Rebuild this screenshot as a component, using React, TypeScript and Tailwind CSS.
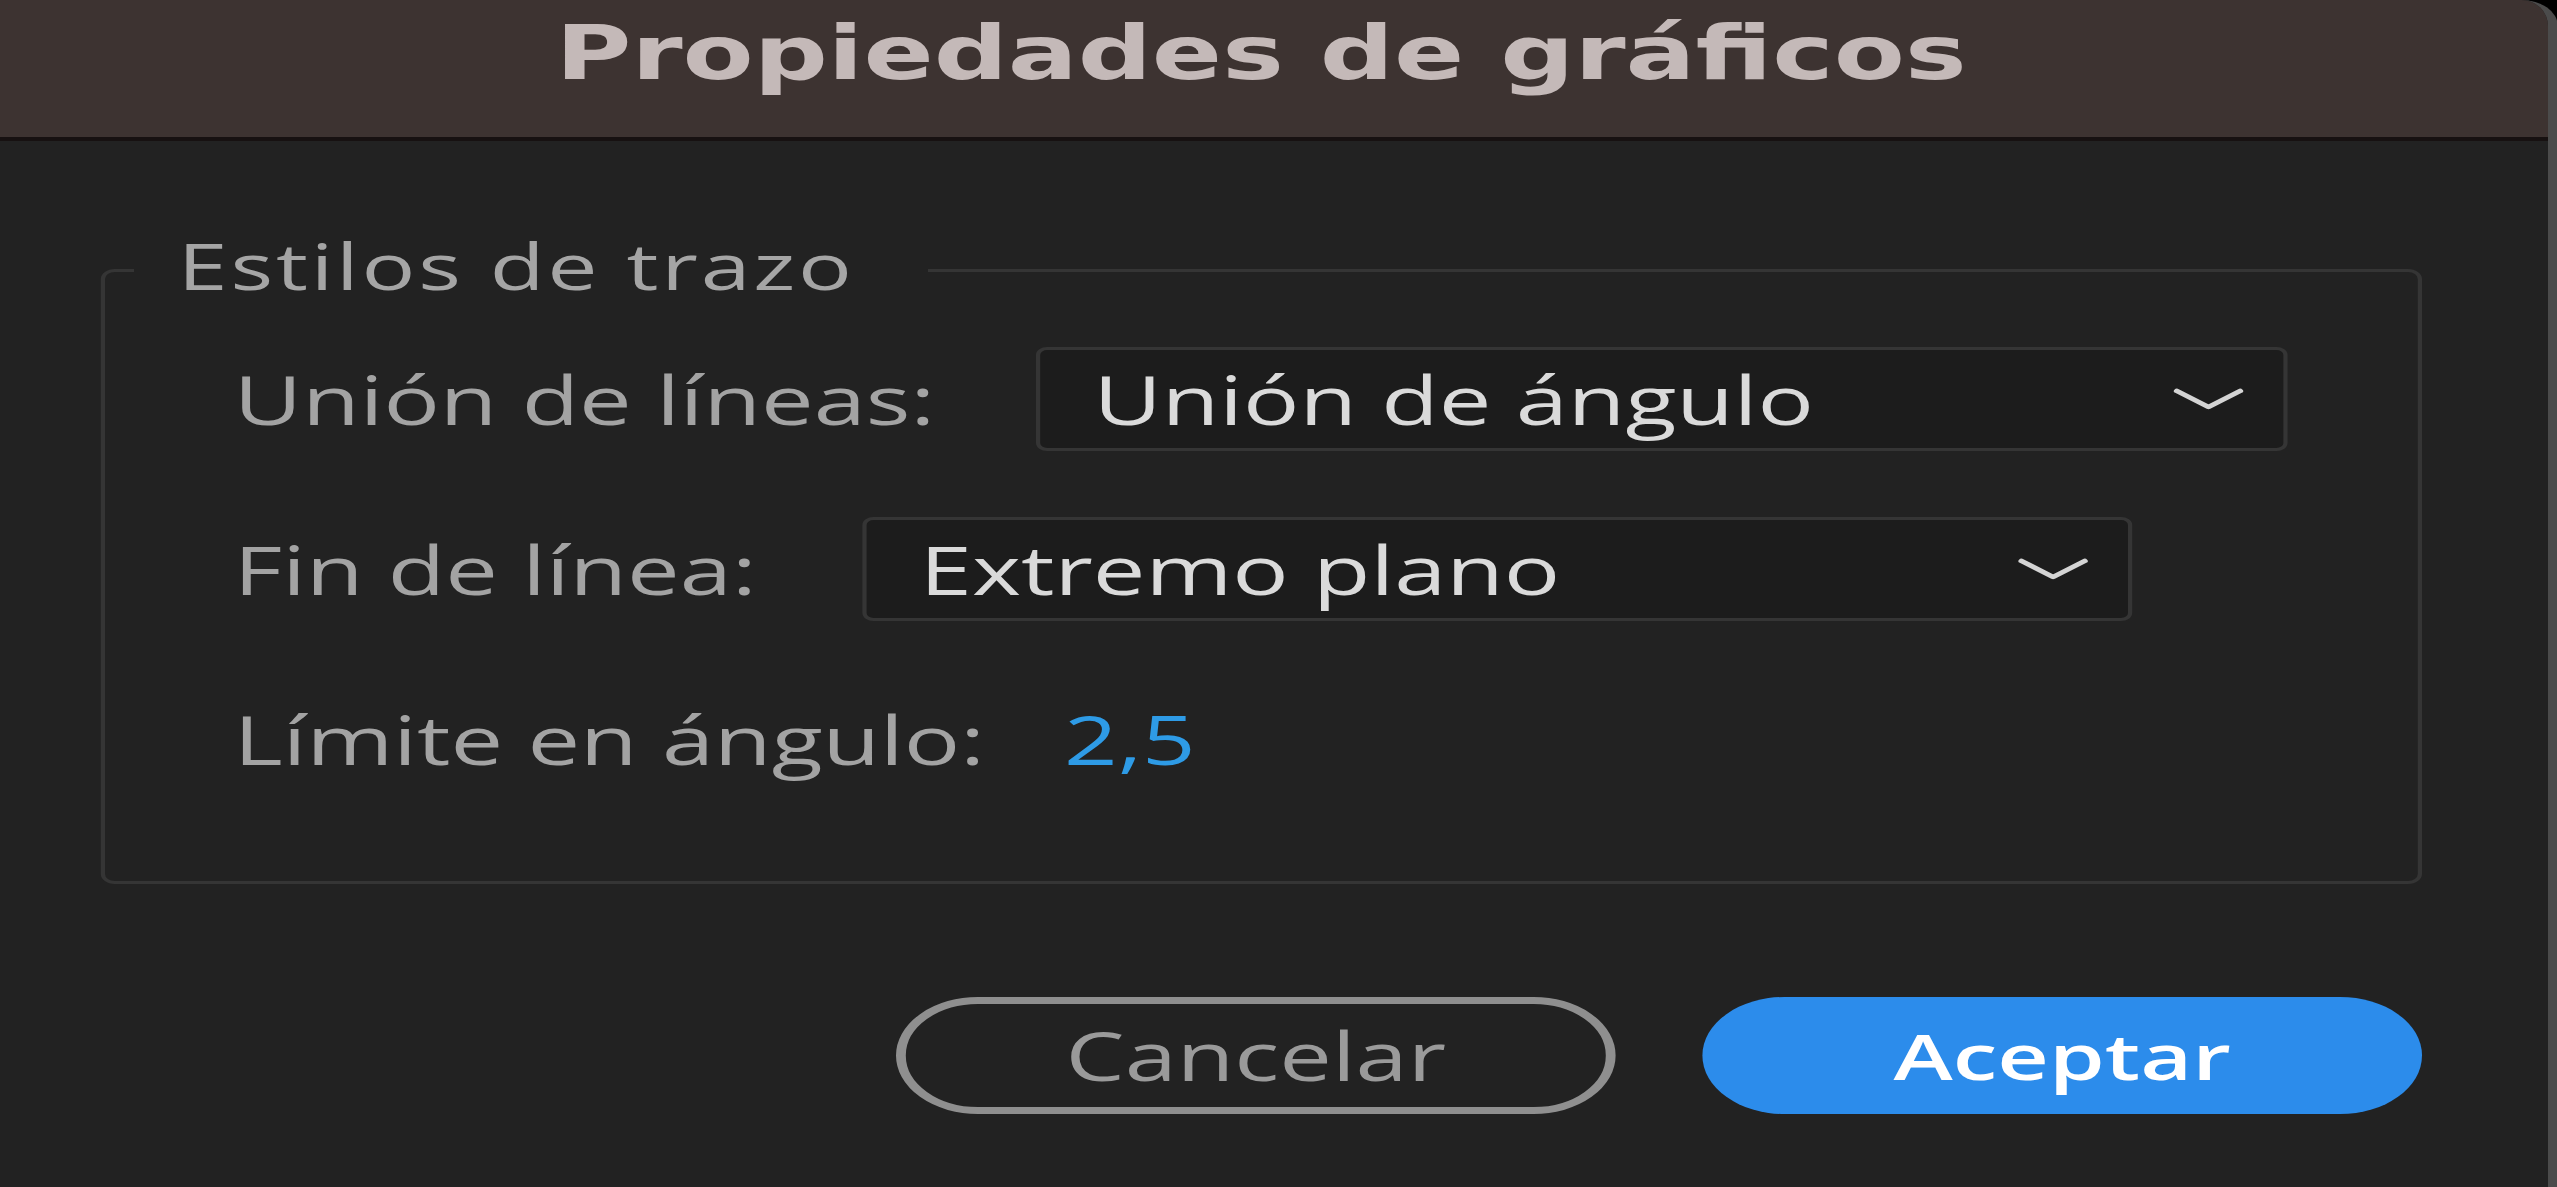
import React from "react";

// Stroke style dialog. The whole window is laid out at natural width
// and stretched horizontally, the way the panel is rendered on screen.

const labelText = "shrink-0 text-[67px] font-medium leading-none text-[#a3a3a3] whitespace-nowrap";

function Chevron() {
  return (
    <svg width="51" height="22" viewBox="0 0 51 22" fill="none" className="shrink-0">
      <polyline
        points="3,3 25.5,19 48,3"
        stroke="#d4d4d4"
        strokeWidth="4.5"
        strokeLinecap="round"
        strokeLinejoin="round"
      />
    </svg>
  );
}

function Select({ value, width }: { value: string; width: string }) {
  return (
    <div
      className={`${width} h-[104px] shrink-0 flex items-center justify-between pl-[38px] pr-[28px] bg-[#1c1c1c] border-[3px] border-[#353535] rounded-[8px]`}
    >
      <span className="text-[67px] font-medium leading-none text-[#dadada] whitespace-nowrap">{value}</span>
      <Chevron />
    </div>
  );
}

export default function App() {
  return (
    <div className="w-full h-[1187px] bg-black overflow-hidden">
      <div className="w-[1826.5px] h-[1187px] origin-top-left scale-x-[1.4] font-['Open_Sans',sans-serif]">
        <div className="h-full bg-[#222222] border-r-[7px] border-[#4b4b4b] rounded-tr-[26px] overflow-hidden">
          {/* title bar */}
          <div className="h-[141px] bg-[#3d3331] border-b-4 border-[#171111] pt-[16px] pr-[18px] text-center">
            <span className="font-['DejaVu_Sans',sans-serif] font-bold text-[74px] leading-none text-[#c4b9b8] whitespace-nowrap">
              Propiedades de gráficos
            </span>
          </div>

          <fieldset className="ml-[72px] mt-[93px] w-[1658px] border-[3px] border-[#353535] rounded-[10px] pl-[21px] pr-[21px] pt-[41px] pb-[90px]">
            <legend className="pl-[31px] pr-[52px] pb-[8px] text-[64px] font-medium leading-none tracking-[2px] text-[#a5a5a5] whitespace-nowrap">
              Estilos de trazo
            </legend>

            <div className="flex flex-col gap-[66px] pl-[71px]">
              <div className="h-[104px] flex items-center">
                <span className={`w-[573px] ${labelText}`}>Unión de líneas:</span>
                <Select value="Unión de ángulo" width="w-[894px]" />
              </div>
              <div className="h-[104px] flex items-center">
                <span className={`w-[449px] ${labelText}`}>Fin de línea:</span>
                <Select value="Extremo plano" width="w-[907px]" />
              </div>
              <div className="h-[104px] flex items-center">
                <span className={`w-[593px] ${labelText}`}>Límite en ángulo:</span>
                <span className="text-[67px] font-medium leading-none text-[#2e9be6]">2,5</span>
              </div>
            </div>
          </fieldset>

          {/* dialog buttons */}
          <div className="ml-[72px] mt-[113px] w-[1658px] flex justify-end gap-[62px]">
            <button className="w-[514px] h-[117px] rounded-full border-[7px] border-[#8f8f8f] flex items-center justify-center text-[67px] font-medium leading-none text-[#9a9a9a]">
              Cancelar
            </button>
            <button className="w-[514px] h-[117px] rounded-full bg-[#2c8ceb] flex items-center justify-center text-[64px] font-semibold leading-none text-white">
              Aceptar
            </button>
          </div>
        </div>
      </div>
    </div>
  );
}
